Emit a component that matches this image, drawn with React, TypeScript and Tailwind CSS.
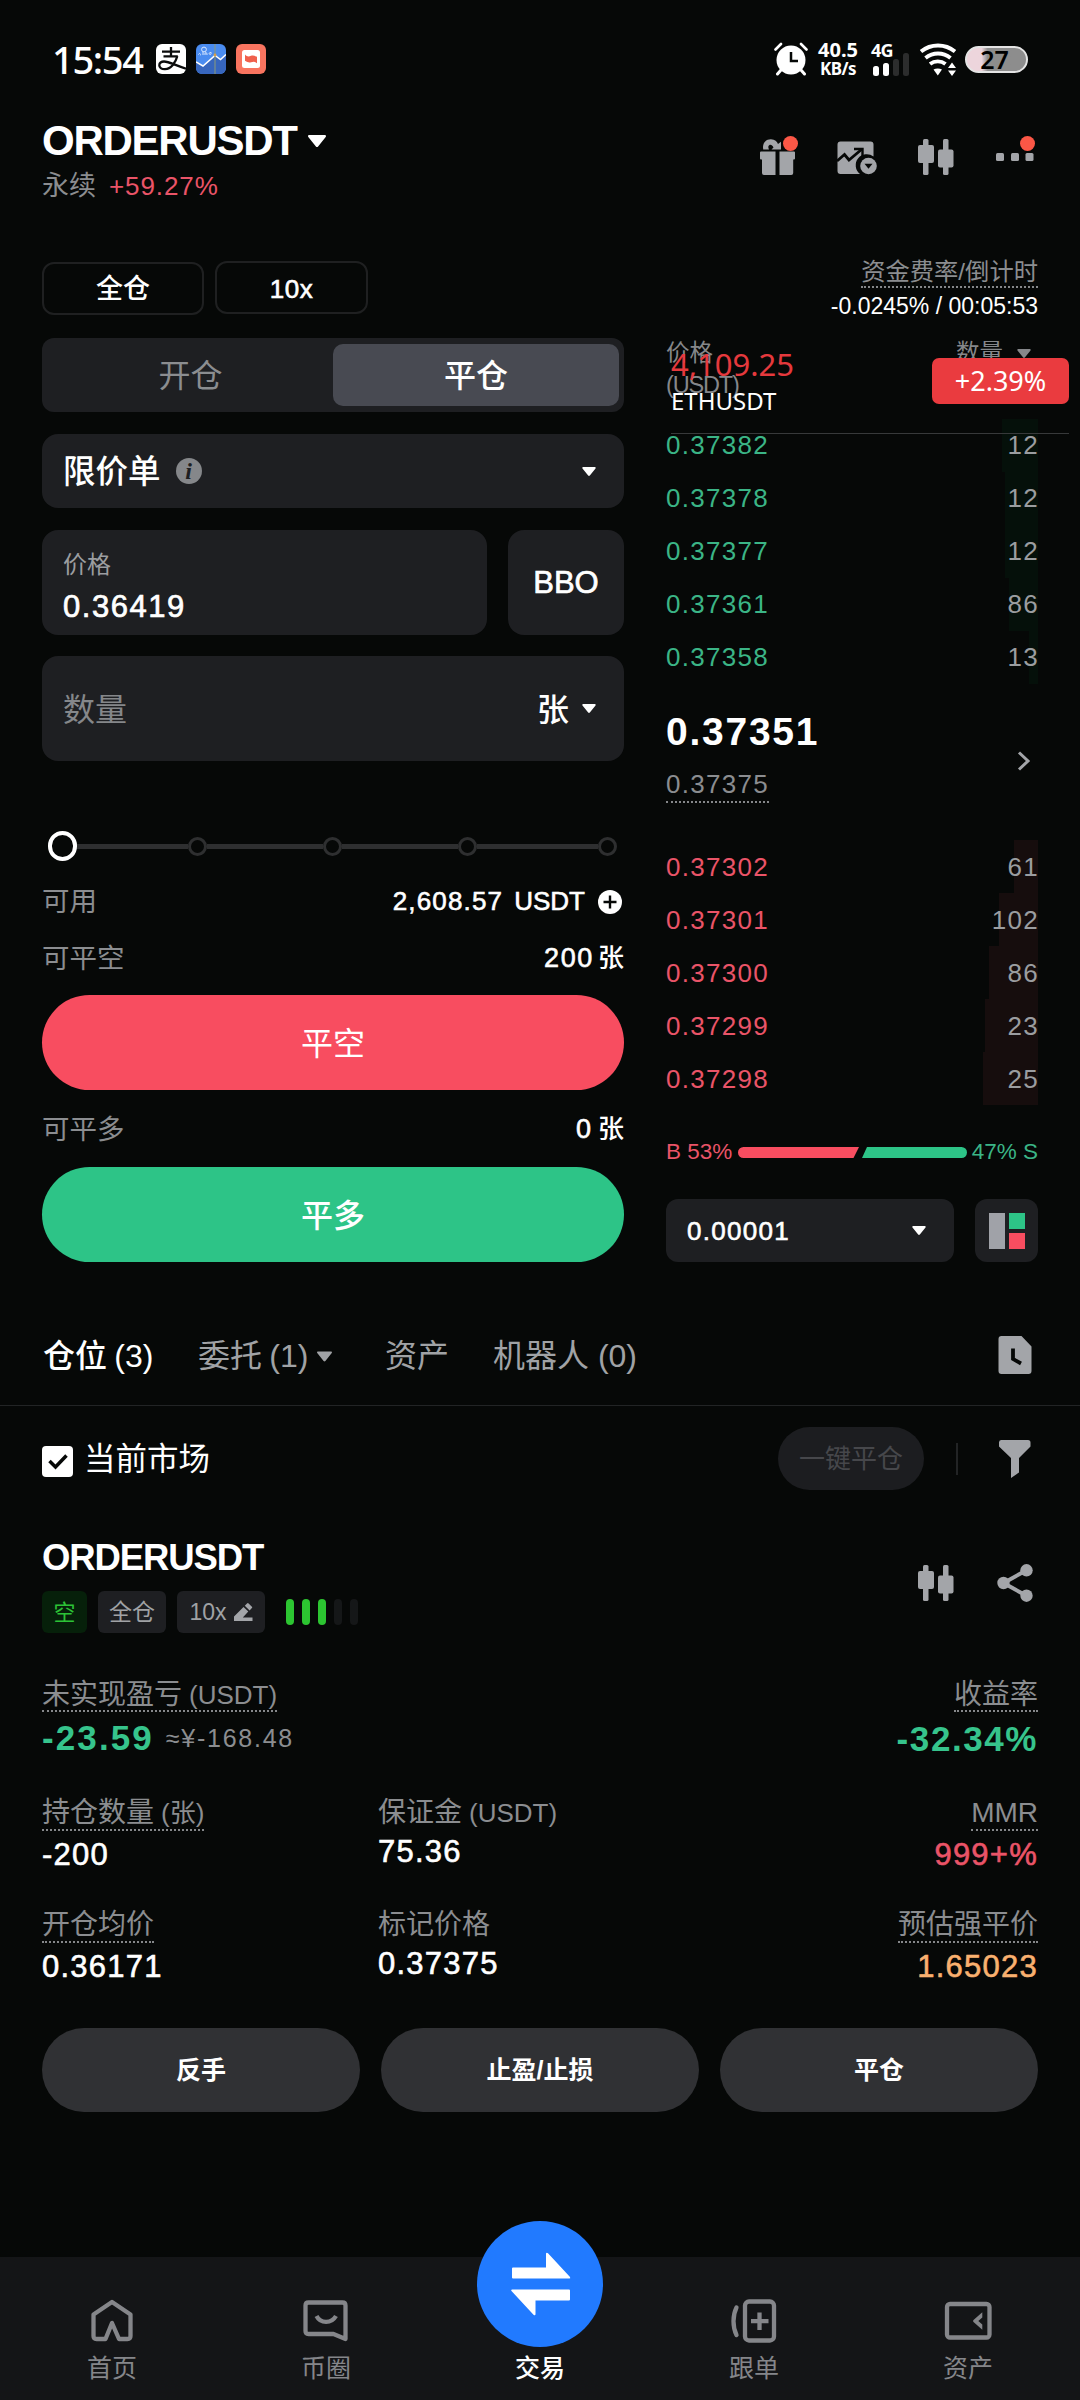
import type { ReactNode } from 'react'

type IconProps = { className?: string }

const BIDS = [
  { price: '0.37382', qty: '12', depth: 36 },
  { price: '0.37378', qty: '12', depth: 33 },
  { price: '0.37377', qty: '12', depth: 33 },
  { price: '0.37361', qty: '86', depth: 29 },
  { price: '0.37358', qty: '13', depth: 9 },
]

const ASKS = [
  { price: '0.37302', qty: '61', depth: 24 },
  { price: '0.37301', qty: '102', depth: 39 },
  { price: '0.37300', qty: '86', depth: 49 },
  { price: '0.37299', qty: '23', depth: 53 },
  { price: '0.37298', qty: '25', depth: 55 },
]

const Caret = ({ className = '' }: IconProps) => (
  <svg viewBox="0 0 18 12" className={`shrink-0 ${className}`} fill="currentColor">
    <path d="M1.2 0h15.6c1 0 1.5 1.1.9 1.9l-7.6 9.500c-.6.8-1.600.8-2.200 0L.3 1.900C-.3 1.100.2 0 1.200 0z" />
  </svg>
)

const AlipayIcon = () => (
  <svg viewBox="0 0 30 30" className="h-[30px] w-[30px]" fill="none">
    <rect width="30" height="30" rx="6" fill="#fff" />
    <path d="M6 7.6h18M15 3v9M7.5 12.3h14.3" stroke="#0b0c0c" strokeWidth="2.3" />
    <path d="M21.3 12.3c-1.6 6-6.3 12.6-12.3 12.9-3.7.1-5.7-1.7-5.7-4 0-2.2 2-3.7 4.7-3.7 4.5 0 10 3.200 22 7.200" stroke="#0b0c0c" strokeWidth="2.3" />
  </svg>
)

const SinaIcon = () => (
  <svg viewBox="0 0 30 30" className="h-[30px] w-[30px]" fill="none">
    <rect width="30" height="30" rx="6" fill="#4a8cf0" />
    <path d="M0 18l7 4 12-11 5 4 6-4v13a6 6 0 01-6 6H6a6 6 0 01-6-6z" fill="#3766bd" />
    <path d="M0 18l7 4 12-10.5 5.5 4L30 10.500" stroke="#fff" strokeWidth="1.5" />
    <path d="M19 0v30" stroke="#8b9a78" strokeWidth="1" />
    <circle cx="19" cy="11" r="1.4" fill="#d9a04a" />
    <circle cx="8" cy="5.5" r="2.4" stroke="#dbe9ff" strokeWidth="1" />
    <path d="M2.5 10.5c1-2 2.5-.5 2 .8M7 8v3M9 11V9c1.500-1 2 0 2 2M15 8.500c-2-.5-2.500 2-.7 2 .8 0 1-2 1-2" stroke="#dbe9ff" strokeWidth="1" />
  </svg>
)

const RedAppIcon = () => (
  <svg viewBox="0 0 30 30" className="h-[30px] w-[30px]">
    <rect width="30" height="30" rx="6" fill="#f8745f" />
    <rect x="6" y="6" width="18" height="18" rx="2.5" fill="#fff" />
    <path d="M9 10.5c2.5 2.8 4 1.8 6 1.3 2-.4 3.500-.3 6 1v6.500c-2.500-2.500-4-1.500-6-1-2 .4-3.500.2-6-1.500z" fill="#f0604c" />
  </svg>
)

const AlarmIcon = () => (
  <svg viewBox="0 0 34 34" className="h-[34px] w-[34px]" fill="none">
    <circle cx="17" cy="18" r="14.5" fill="#fff" />
    <path d="M1.5 7.5L7 2M32.5 7.5L27 2" stroke="#fff" strokeWidth="2.6" strokeLinecap="round" />
    <path d="M7 28l-3.5 4M27 28l3.5 4" stroke="#fff" strokeWidth="3" strokeLinecap="round" />
    <path d="M17 10v9h7" stroke="#060807" strokeWidth="2.5" />
  </svg>
)

const SignalIcon = () => (
  <svg viewBox="0 0 38 23" className="h-[23px] w-[38px]">
    <rect x="1" y="13" width="6" height="10" rx="2.5" fill="#fff" />
    <rect x="11" y="10" width="6" height="13" rx="2.5" fill="#fff" />
    <rect x="21" y="6" width="6" height="17" rx="2.5" fill="#2c2d2d" />
    <rect x="31" y="0" width="6" height="23" rx="2.5" fill="#2c2d2d" />
  </svg>
)

const WifiIcon = () => (
  <svg viewBox="0 0 38 33" className="h-[33px] w-[38px]" fill="none">
    <path d="M2 8.5C12 .5 26 .5 36 8.5M6.5 15c7.500-6 17.500-6 25 0M11 21c4.500-3.500 11-3.500 15.500 0" stroke="#fff" strokeWidth="3.9" />
    <path d="M14.5 26.5c2.5-1.5 6-1.5 8.500 0L18.800 32.500z" fill="#fff" />
    <path d="M29 25l4-5.500 4 5.500zM29 27.500l4 5.500 4-5.500z" fill="#fff" />
  </svg>
)

const GiftIcon = () => (
  <svg viewBox="0 0 36 36" className="h-9 w-9" fill="#a3a5a9">
    <path d="M0 13.5q0-1 1-1h14.500v23.500H4q-2 0-2-2V20.500H1q-1 0-1-1zM19.500 12.500H34q1 0 1 1v6q0 1-1 1h-.8V34q0 2-2 2H19.500z" />
    <path d="M3.200 10.500C2 3 7 0 11 .2c4 .2 6 2.300 7 4.800l3-2.200v7.700h-9.500l2-2c-1-2.300-2.700-3-4-2.500-1.500.7-1.500 2.500-.5 4.500z" />
  </svg>
)

const ChartSwitchIcon = () => (
  <svg viewBox="0 0 40 36" className="h-9 w-10">
    <path d="M3.5 2.500h30q3 0 3 3v12a10.500 10.500 0 00-13.500 17.500H3.500q-3 0-3-3V5.500q0-3 3-3z" fill="#a3a5a9" />
    <path d="M0 22l7.500-6.500 4.500 5.500L24.500 10.500" stroke="#060807" strokeWidth="2.8" fill="none" />
    <path d="M17 10h8.500v8" stroke="#060807" strokeWidth="2.4" fill="none" />
    <circle cx="31.5" cy="27" r="8.3" fill="#a3a5a9" />
    <path d="M27.500 24.700h8l-4 5z" fill="#060807" />
  </svg>
)

const CandlesIcon = () => (
  <svg viewBox="0 0 36 36" className="h-9 w-9" fill="#a3a5a9">
    <rect x="5" y="0" width="5.5" height="36" rx="1.5" />
    <rect x="0" y="6" width="16" height="18" rx="2" />
    <rect x="25" y="0" width="5.5" height="36" rx="1.5" />
    <rect x="20" y="10.5" width="15.5" height="18" rx="2" />
  </svg>
)

const MoreIcon = () => (
  <svg viewBox="0 0 38 36" className="h-9 w-[38px]" fill="#a3a5a9">
    <rect x="0" y="14" width="8" height="8" rx="1.5" />
    <rect x="15" y="14" width="8" height="8" rx="1.5" />
    <rect x="29.5" y="14" width="8" height="8" rx="1.5" />
  </svg>
)

const HistoryIcon = () => (
  <svg viewBox="0 0 34 38" className="h-[38px] w-[34px]">
    <path d="M3 0h20.500L33.500 10.500V35q0 3-3 3H3.500q-3 0-3-3V3q0-3 3-3z" fill="#a3a5a9" />
    <path d="M15 12.500v10.500l8 4.500" stroke="#060807" strokeWidth="3.8" fill="none" />
  </svg>
)

const FilterIcon = () => (
  <svg viewBox="0 0 34 38" className="h-[38px] w-[34px]" fill="#a3a5a9">
    <path d="M3 0h27q2.500 0 2.500 2.500v4L21 18v14.500L13 38V18L1 6.500v-4Q1 0 3 0z" />
  </svg>
)

const ShareIcon = () => (
  <svg viewBox="0 0 36 38" className="h-[38px] w-9" fill="#a3a5a9">
    <path d="M29 6.500L6.500 19 29 31.500" stroke="#a3a5a9" strokeWidth="4" fill="none" />
    <circle cx="29.5" cy="6.3" r="6.2" />
    <circle cx="6.5" cy="19" r="6.2" />
    <circle cx="29.5" cy="31.7" r="6.2" />
  </svg>
)

const EditIcon = () => (
  <svg viewBox="0 0 19 18" className="h-[18px] w-[19px]" fill="#a3a5a9">
    <path d="M0 13.500L9.500 4l4.800 4.500-5.500 6H18.500V18H0zM10.800 2.700L13 .5q.8-.8 1.600 0l3.300 3.200q.6.7 0 1.400L15.600 7.400z" />
  </svg>
)

const HomeIcon = () => (
  <svg viewBox="0 0 44 44" className="h-11 w-11" fill="none" stroke="#85868a" strokeWidth="4.3" strokeLinejoin="round">
    <path d="M3.500 15.500L22 3l18.500 12.500V37q0 3-3 3H29L22 24 15.500 40H6.500q-3 0-3-3z" />
  </svg>
)

const ChatIcon = () => (
  <svg viewBox="0 0 46 44" className="h-11 w-[46px]" fill="none" stroke="#85868a" strokeWidth="4.3" strokeLinejoin="round">
    <path d="M5.500 3.500h34q3 0 3 3V40L30.500 35H5.500q-3 0-3-3V6.500q0-3 3-3z" />
    <path d="M13.500 17c4 7.800 15 7.800 19.500 0" />
  </svg>
)

const CopyTradeIcon = () => (
  <svg viewBox="0 0 46 44" className="h-11 w-[46px]" fill="none" stroke="#85868a" strokeWidth="4.3">
    <rect x="14" y="2.5" width="29" height="39" rx="4" />
    <path d="M28.500 13.500v17.500M20 22.200h17.500" />
    <path d="M5.500 8.500c-4 8-4 19.500 0 27.500" strokeLinecap="round" />
  </svg>
)

const WalletIcon = () => (
  <svg viewBox="0 0 48 44" className="h-11 w-12" fill="none" stroke="#85868a" strokeWidth="4.3">
    <rect x="3" y="5" width="42.5" height="33.5" rx="3" />
    <path d="M38.300 13.200v5.300L34.300 22l4 3.500v5.300L29.500 23q-1-1 0-2z" fill="#85868a" stroke="none" />
  </svg>
)

const SwapIcon = () => (
  <svg viewBox="0 0 60 64" className="ml-[2px] h-16 w-[60px]" fill="#fff">
    <path d="M2 15.500h33V1.500q.5-1.500 2-.3L59 25q.8 1.500-.7 1.500H2q-1 0-1-1v-9q0-1 1-1z" />
    <path d="M58 48.500H24.500V62.500q-.5 1.500-2 .3L.5 39q-.8-1.500.7-1.500H58q1 0 1 1v9q0 1-1 1z" />
  </svg>
)

function StatusBar() {
  return (
    <div className="flex h-[104px] items-center justify-between pt-[14px] pr-[52px] pl-[52px] text-white">
      <div className="flex items-center">
        <span className="w-[104px] font-['Noto_Sans'] text-[38px] leading-[40px] font-medium tracking-[-0.035em]">15:54</span>
        <div className="flex gap-[10px]">
          <AlipayIcon />
          <SinaIcon />
          <RedAppIcon />
        </div>
      </div>
      <div className="flex items-center">
        <AlarmIcon />
        <div className="ml-[9px] flex w-[42px] flex-col items-center font-['Noto_Sans'] font-bold">
          <span className="text-[20px] leading-[19px]">40.5</span>
          <span className="text-[17px] leading-[19px] tracking-[-0.03em]">KB/s</span>
        </div>
        <div className="relative ml-[13px] h-[33px] w-[38px]">
          <span className="absolute -top-[2px] -left-px font-['Noto_Sans'] text-[18px] leading-[18px] font-bold tracking-[-0.05em]">4G</span>
          <div className="absolute bottom-0 left-0">
            <SignalIcon />
          </div>
        </div>
        <div className="ml-[9px]">
          <WifiIcon />
        </div>
        <div className="ml-[8px] flex h-[27px] w-[63px] items-center justify-center rounded-full border-2 border-[#e4e4e4] bg-linear-to-r from-[#edd5dc] from-25% to-[#8d8d8d] to-35% font-['Noto_Sans'] text-[25px] leading-none font-semibold text-black">
          <span className="-ml-[4px]">27</span>
        </div>
      </div>
    </div>
  )
}

function Header() {
  return (
    <div className="mt-[14px] flex h-[90px] items-start justify-between pr-[46px] pl-[42px]">
      <div>
        <div className="flex h-[46px] items-center gap-[11px] text-white">
          <h1 className="text-[42px] leading-none font-bold tracking-[-0.03em]">ORDERUSDT</h1>
          <Caret className="h-3 w-[18px]" />
        </div>
        <div className="flex h-11 items-center gap-[13px] text-[26px]">
          <span className="text-[27px] text-[#8b8d90]">永续</span>
          <span className="tracking-[0.035em] text-[#ea5468]">+59.27%</span>
        </div>
      </div>
      <div className="flex pt-[21px]">
        <div className="relative">
          <GiftIcon />
          <span className="absolute -top-[3px] left-[23px] h-[15px] w-[15px] rounded-full bg-[#fb5746]" />
        </div>
        <div className="ml-[41px]">
          <ChartSwitchIcon />
        </div>
        <div className="ml-[41px]">
          <CandlesIcon />
        </div>
        <div className="relative ml-[42px]">
          <MoreIcon />
          <span className="absolute -top-[3px] left-[24px] h-[15px] w-[15px] rounded-full bg-[#fb5746]" />
        </div>
      </div>
    </div>
  )
}

function Slider() {
  return (
    <div className="mt-[70px] flex h-[30px] items-center pr-[7px] pl-[6px]">
      <span className="h-[30px] w-[30px] rounded-full border-4 border-white" />
      {[111, 116, 116, 121].map((w, i) => (
        <div key={i} className="flex items-center">
          <span className="h-[5px] bg-[#2e2f30]" style={{ width: w }} />
          <span className="h-[19px] w-[19px] rounded-full border-[3px] border-[#2e2f30]" />
        </div>
      ))}
    </div>
  )
}

function InfoRow({ label, className, children }: { label: string; className: string; children: ReactNode }) {
  return (
    <div className={`flex h-9 items-center justify-between text-[26px] ${className}`}>
      <span className="pt-px text-[27.5px] text-[#8b8d90]">{label}</span>
      <div className="flex items-center pt-px font-medium text-white">{children}</div>
    </div>
  )
}

function OrderForm() {
  return (
    <div className="flex w-[582px] flex-col">
      <div className="flex h-[54px] gap-[11px] font-medium text-white">
        <button className="mt-px flex h-[53px] w-[162px] items-center justify-center rounded-xl border-2 border-[#1f2021] pt-[2px] text-[27px]">全仓</button>
        <button className="flex h-[53px] w-[153px] items-center justify-center rounded-xl border-2 border-[#1f2021] pt-[3px] text-[26px] tracking-[0.02em] [-webkit-text-stroke:0.6px]">10x</button>
      </div>

      <div className="mt-[23px] flex h-[74px] items-center rounded-xl bg-[#1e1f22] pr-[5px] text-[32px]">
        <button className="h-full flex-1 pt-[2px] pl-[6px] text-[#8b8d90]">开仓</button>
        <button className="h-[62px] w-[286px] rounded-[10px] bg-[#484a52] pt-[2px] font-medium text-white">平仓</button>
      </div>

      <div className="mt-[22px] flex h-[74px] items-center rounded-2xl bg-[#1e1f22] pr-7 pl-[21px] text-white">
        <span className="pt-[2px] text-[32.5px] font-medium">限价单</span>
        <span className="ml-[15px] flex h-[26px] w-[26px] items-center justify-center rounded-full bg-[#85878a] font-['Liberation_Serif'] text-[24px] leading-none font-bold text-[#1e1f22] italic">i</span>
        <Caret className="ml-auto h-[9px] w-[14px]" />
      </div>

      <div className="mt-[22px] flex h-[105px] justify-between text-white">
        <div className="flex w-[445px] flex-col rounded-2xl bg-[#1e1f22] pt-[16px] pl-[21px]">
          <span className="h-9 text-[24px] leading-[38px] text-[#9b9da0]">价格</span>
          <span className="mt-[6px] h-[36px] text-[31px] leading-[38px] tracking-[0.05em] [-webkit-text-stroke:0.7px]">0.36419</span>
        </div>
        <button className="w-[116px] rounded-2xl bg-[#1e1f22] pt-[2px] text-[31px] [-webkit-text-stroke:0.7px]">BBO</button>
      </div>

      <div className="mt-[21px] flex h-[105px] items-center rounded-2xl bg-[#1e1f22] pr-7 pl-[21px] text-[32px]">
        <span className="pt-[2px] text-[#85878a]">数量</span>
        <span className="ml-auto pt-[2px] font-medium text-white">张</span>
        <Caret className="ml-[13px] h-[9px] w-[14px] text-white" />
      </div>

      <Slider />

      <InfoRow label="可用" className="mt-[22px]">
        <span className="tracking-[0.045em] [-webkit-text-stroke:0.6px]">2,608.57</span>
        <span className="ml-[11px] [-webkit-text-stroke:0.6px]">USDT</span>
        <svg viewBox="0 0 24 24" className="mr-[2px] ml-[13px] h-6 w-6">
          <circle cx="12" cy="12" r="12" fill="#fff" />
          <path d="M12 5.500v13M5.500 12h13" stroke="#060807" strokeWidth="2.4" />
        </svg>
      </InfoRow>
      <InfoRow label="可平空" className="mt-[21px]">
        <span className="text-[27px] tracking-[0.06em] [-webkit-text-stroke:0.6px]">200</span>
        <span className="ml-[4px]">张</span>
      </InfoRow>
      <button className="mt-[19px] h-[95px] rounded-full bg-[#f84d60] pt-[2px] text-[32px] text-white">平空</button>
      <InfoRow label="可平多" className="mt-[21px]">
        <span className="text-[27px] [-webkit-text-stroke:0.6px]">0</span>
        <span className="ml-[7px]">张</span>
      </InfoRow>
      <button className="mt-5 h-[95px] rounded-full bg-[#2dc487] pt-[2px] text-[32px] font-medium text-white">平多</button>
    </div>
  )
}

function OrderBook() {
  return (
    <div className="relative flex w-[372px] flex-col">
      <div className="-mt-[5px] h-8 self-end border-b-2 border-dotted border-[#85878a] text-[24.3px] leading-[31px] text-[#8b8d90]">资金费率/倒计时</div>
      <div className="h-[35px] self-end text-[23px] leading-[36px] text-white">-0.0245% / 00:05:53</div>

      <div className="mt-[14px] flex h-16 justify-between text-[23.5px] leading-8 text-[#85878a]">
        <div>
          <div>价格</div>
          <div className="tracking-[-0.05em]">(USDT)</div>
        </div>
        <div className="flex h-8 items-center gap-[14px] pr-[7px]">
          数量
          <Caret className="h-[9px] w-[14px]" />
        </div>
      </div>

      <div className="mt-[18px]">
        {BIDS.map(o => (
          <div key={o.price} className="relative flex h-[53px] items-center justify-between text-[26px] tracking-[0.05em]">
            <span className="absolute inset-y-0 right-0 bg-[#05100a]" style={{ width: o.depth }} />
            <span className="relative text-[#3bb586]">{o.price}</span>
            <span className="relative -mr-px text-[#9b9da0]">{o.qty}</span>
          </div>
        ))}
      </div>

      <div className="mt-[22px] flex h-[97px] justify-between">
        <div>
          <div className="h-[51px] text-[39px] leading-[51px] font-bold tracking-[0.045em] text-white">0.37351</div>
          <div className="mt-[10px] h-9 w-fit border-b-2 border-dotted border-[#85878a] text-[26px] leading-[35px] tracking-[0.05em] text-[#8b8d90]">0.37375</div>
        </div>
        <svg viewBox="0 0 14 20" className="mt-[45px] mr-[7px] h-5 w-[14px]" fill="none" stroke="#a3a5a9" strokeWidth="3">
          <path d="M2 1.500L11 10l-9 8.500" />
        </svg>
      </div>

      <div className="mt-[37px]">
        {ASKS.map(o => (
          <div key={o.price} className="relative flex h-[53px] items-center justify-between text-[26px] tracking-[0.05em]">
            <span className="absolute inset-y-0 right-0 bg-[#160d0d]" style={{ width: o.depth }} />
            <span className="relative pt-[2px] text-[#ea5468]">{o.price}</span>
            <span className="relative -mr-px pt-[2px] text-[#9b9da0]">{o.qty}</span>
          </div>
        ))}
      </div>

      <div className="mt-[29px] flex h-9 items-center justify-between text-[22.5px]">
        <span className="text-[#ea5468]">B 53%</span>
        <svg viewBox="0 0 229 11" className="h-[11px] w-[229px]">
          <path d="M5.500 0H121l-5.500 11H5.500a5.500 5.500 0 010-11z" fill="#f84d60" />
          <path d="M129 0h94.500a5.500 5.500 0 010 11H124z" fill="#2dc487" />
        </svg>
        <span className="text-[#3bb586]">47% S</span>
      </div>

      <div className="mt-[29px] flex h-[63px] justify-between">
        <div className="flex w-[288px] items-center justify-between rounded-xl bg-[#1e1f22] pr-7 pl-[21px] text-[26px] tracking-[0.05em] text-white [-webkit-text-stroke:0.6px]">
          <span className="pt-[2px]">0.00001</span>
          <Caret className="h-[9px] w-[14px]" />
        </div>
        <div className="flex w-[63px] items-center justify-center gap-1 rounded-xl bg-[#1e1f22]">
          <span className="h-9 w-4 bg-[#a0a2a8]" />
          <div className="flex flex-col gap-1">
            <span className="h-4 w-4 bg-[#2dc487]" />
            <span className="h-4 w-4 bg-[#f84d60]" />
          </div>
        </div>
      </div>

      {/* floating price ticker */}
      <div className="absolute top-[84px] left-[5px] flex h-[89px] w-[398px] justify-between border-b border-[#37393a] font-['Noto_Sans']">
        <div>
          <div className="text-[31px] leading-[39px] text-[#e5393d]">4,109.25</div>
          <div className="text-[24px] leading-[33px] text-white">ETHUSDT</div>
        </div>
        <div className="mt-[13px] flex h-[46px] w-[137px] items-center justify-center rounded-[7px] bg-[#ea3b3f] pt-px text-[27px] text-white">+2.39%</div>
      </div>
    </div>
  )
}

function Tabs() {
  return (
    <div className="mt-12 flex h-[96px] items-center border-b border-[#222425] pr-[48px] pb-[5px] pl-[43px] text-[32px] text-[#a0a2a5]">
      <span className="w-[155px] pt-[2px] font-medium whitespace-nowrap text-white [word-spacing:-0.05em]">仓位 (3)</span>
      <span className="flex w-[187px] items-center gap-[9px] pt-[2px] whitespace-nowrap [word-spacing:-0.05em]">
        委托 (1)
        <Caret className="h-[11px] w-[15px]" />
      </span>
      <span className="w-[108px] pt-[2px]">资产</span>
      <span className="flex-1 pt-[2px]">机器人 (0)</span>
      <HistoryIcon />
    </div>
  )
}

function FilterRow() {
  return (
    <div className="mt-[21px] flex h-[63px] items-center pr-[48px] pl-[42px]">
      <span className="mt-[6px] flex h-[31px] w-[31px] items-center justify-center rounded bg-white">
        <svg viewBox="0 0 20 16" className="h-4 w-5" fill="none" stroke="#060807" strokeWidth="3.5">
          <path d="M1.500 7L7.500 13 18.500 1.500" />
        </svg>
      </span>
      <span className="ml-[11px] pt-[3px] text-[31.5px] text-white">当前市场</span>
      <button className="ml-auto h-[63px] w-[146px] rounded-full bg-[#1c1d20] pt-px text-[26px] text-[#46474b]">一键平仓</button>
      <span className="mr-[40px] ml-8 h-8 w-[2px] bg-[#222425]" />
      <FilterIcon />
    </div>
  )
}

type MetricProps = { label: string; unit?: string; value: string; hint?: boolean; end?: boolean; color?: string }

function Metric({ label, unit, value, hint = true, end = false, color = 'text-white' }: MetricProps) {
  return (
    <div className={`flex flex-col ${end ? 'items-end' : 'items-start'}`}>
      <span className={`h-9 border-b-2 border-dotted text-[28px] leading-[36px] whitespace-nowrap text-[#8b8d90] ${hint ? 'border-[#85878a]' : 'border-transparent'}`}>
        {label}
        {unit && <span className="ml-[7px] text-[26px]">{unit}</span>}
      </span>
      <span className={`text-[31px] tracking-[0.04em] [-webkit-text-stroke:0.6px] ${hint ? 'leading-[48px]' : 'leading-[41px]'} ${color}`}>{value}</span>
    </div>
  )
}

function Position() {
  return (
    <div className="mt-[46px] px-[42px]">
      <div className="flex h-[97px] justify-between">
        <div>
          <h2 className="h-[43px] text-[36.5px] leading-[43px] font-bold tracking-[-0.03em] text-white">ORDERUSDT</h2>
          <div className="mt-3 flex h-[42px] items-center text-[22px] text-[#a0a2a5]">
            <span className="flex h-full w-[45px] items-center justify-center rounded-md bg-[#06200a] text-[#2cc236]">空</span>
            <span className="ml-[11px] flex h-full w-[68px] items-center justify-center rounded-md bg-[#1e1f22] text-[23px]">全仓</span>
            <span className="ml-[11px] flex h-full w-[88px] items-center justify-center gap-[7px] rounded-md bg-[#1e1f22] text-[23px]">
              10x
              <EditIcon />
            </span>
            <div className="ml-[21px] flex gap-2">
              {[1, 1, 1, 0, 0].map((on, i) => (
                <span key={i} className={`h-[26px] w-2 rounded-full ${on ? 'bg-[#2cc531]' : 'bg-[#151718]'}`} />
              ))}
            </div>
          </div>
        </div>
        <div className="flex items-center gap-[43px] pr-[5px] pb-1">
          <CandlesIcon />
          <ShareIcon />
        </div>
      </div>

      <div className="mt-[43px] flex justify-between text-[#8b8d90]">
        <div>
          <div className="h-9 w-fit border-b-2 border-dotted border-[#85878a] text-[28px] leading-[37px]">
            未实现盈亏<span className="ml-[7px] text-[26px]">(USDT)</span>
          </div>
          <div className="flex h-[53px] items-center gap-[12px]">
            <span className="text-[35px] font-bold tracking-[0.06em] text-[#36c48c]">-23.59</span>
            <span className="text-[25px] tracking-[0.07em]">≈¥-168.48</span>
          </div>
        </div>
        <div className="flex flex-col items-end">
          <div className="h-9 border-b-2 border-dotted border-[#85878a] text-[28px] leading-[37px]">收益率</div>
          <div className="text-[35px] leading-[53px] font-bold tracking-[0.045em] text-[#36c48c]">-32.34%</div>
        </div>
      </div>

      <div className="mt-[30px] grid grid-cols-[336px_330px_330px] gap-y-[28px]">
        <Metric label="持仓数量" unit="(张)" value="-200" />
        <Metric label="保证金" unit="(USDT)" value="75.36" hint={false} />
        <Metric label="MMR" value="999+%" end color="text-[#ea5468]" />
        <Metric label="开仓均价" value="0.36171" />
        <Metric label="标记价格" value="0.37375" hint={false} />
        <Metric label="预估强平价" value="1.65023" end color="text-[#f9b06f]" />
      </div>

      <div className="mt-[37px] grid h-[84px] grid-cols-3 gap-[21px] text-[25px] font-bold text-white">
        <button className="rounded-full bg-[#303134] pt-px">反手</button>
        <button className="rounded-full bg-[#303134] pt-px">止盈/止损</button>
        <button className="rounded-full bg-[#303134] pt-px">平仓</button>
      </div>
    </div>
  )
}

function NavItem({ label, children }: { label: string; children: ReactNode }) {
  return (
    <div className="flex w-[214px] flex-col items-center pt-[42px]">
      {children}
      <span className="mt-[7px] leading-9">{label}</span>
    </div>
  )
}

function BottomNav() {
  return (
    <nav className="mt-auto flex h-[143px] justify-center bg-[#141517] text-[25px] text-[#85868a]">
      <NavItem label="首页"><HomeIcon /></NavItem>
      <NavItem label="币圈"><ChatIcon /></NavItem>
      <div className="flex w-[214px] flex-col items-center font-medium text-white">
        <div className="-mt-9 flex h-[126px] w-[126px] shrink-0 items-center justify-center rounded-full bg-[#217aff]">
          <SwapIcon />
        </div>
        <span className="mt-[3px] leading-9">交易</span>
      </div>
      <NavItem label="跟单"><CopyTradeIcon /></NavItem>
      <NavItem label="资产"><WalletIcon /></NavItem>
    </nav>
  )
}

export default function App() {
  return (
    <div className="flex h-[2400px] w-[1080px] flex-col overflow-hidden bg-[#060807] font-['Liberation_Sans','Noto_Sans_CJK_SC',sans-serif]">
      <StatusBar />
      <Header />
      <div className="mt-[53px] flex justify-between pr-[42px] pl-[42px]">
        <OrderForm />
        <OrderBook />
      </div>
      <Tabs />
      <FilterRow />
      <Position />
      <BottomNav />
    </div>
  )
}
